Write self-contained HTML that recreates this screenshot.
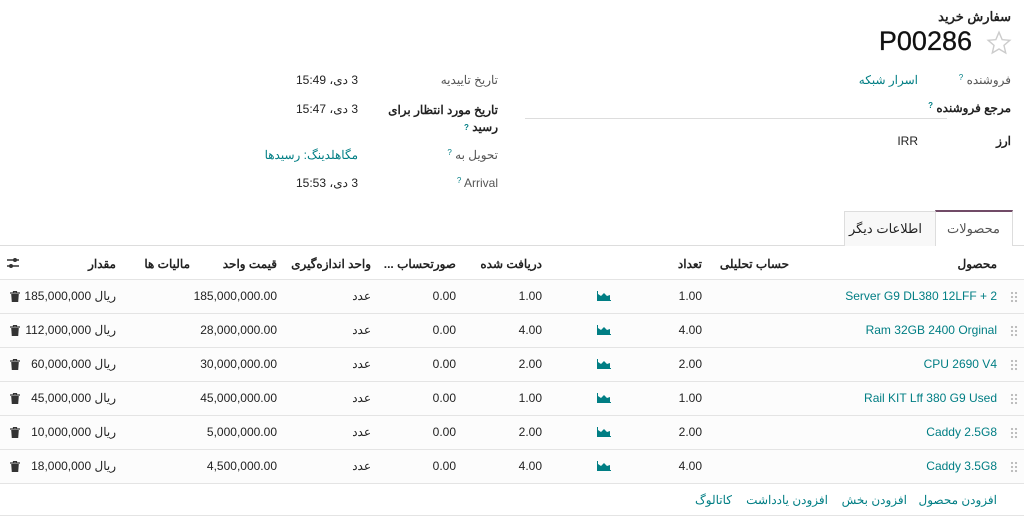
<!DOCTYPE html>
<html><head><meta charset="utf-8"><style>
body{margin:0;width:1024px;height:529px;background:#fff;font-family:"Liberation Sans","Noto Sans CJK SC",sans-serif;color:#222;font-size:12px;overflow:hidden;position:relative;direction:rtl}
.a{position:absolute;white-space:nowrap}
.r{text-align:right}
.t{color:#017e84}
.g{color:#555}
.q{color:#017e84;font-size:8px;vertical-align:top}
.l{direction:ltr}
.row{position:absolute;left:0;width:1024px;height:33px;border-bottom:1px solid #e4e4e4;background:#fcfcfc}
.hd{font-weight:bold;color:#222}
</style></head><body>
<div class="a r" style="right:13px;top:9px;font-size:13px;font-weight:bold">سفارش خرید</div>
<div class="a l" style="right:52px;top:26px;font-size:27px;color:#111;-webkit-text-stroke:0.3px #111">P00286</div>
<svg class="a" style="left:986px;top:30px" width="26" height="26" viewBox="0 0 24 24"><path d="M12 2l2.9 6.9 7.1.6-5.4 4.7 1.6 7-6.2-3.7-6.2 3.7 1.6-7L2 9.5l7.1-.6z" fill="none" stroke="#ccc" stroke-width="1.3"/></svg>

<div class="a g" style="right:13px;top:73px">فروشنده <span class="q">?</span></div>
<div class="a t" style="right:106px;top:73px">اسرار شبکه</div>
<div class="a" style="right:13px;top:101px;font-weight:bold">مرجع فروشنده <span class="q">?</span></div>
<div class="a" style="left:525px;top:118px;width:422px;height:1px;background:#ddd"></div>
<div class="a" style="right:13px;top:134px;font-weight:bold">ارز</div>
<div class="a" style="right:106px;top:134px">IRR</div>

<div class="a g" style="right:526px;top:73px">تاریخ تاییدیه</div>
<div class="a" style="right:666px;top:73px">3 دی، 15:49</div>
<div class="a r" style="right:526px;top:102px;font-weight:bold;line-height:17px">تاریخ مورد انتظار برای<br>رسید <span class="q">?</span></div>
<div class="a" style="right:666px;top:102px">3 دی، 15:47</div>
<div class="a g" style="right:526px;top:148px">تحویل به <span class="q">?</span></div>
<div class="a t" style="right:666px;top:148px">مگاهلدینگ: رسیدها</div>
<div class="a g l" style="right:526px;top:176px"><span class="q">?</span> Arrival</div>
<div class="a" style="right:666px;top:176px">3 دی، 15:53</div>

<div class="a" style="left:0;top:245px;width:1024px;height:1px;background:#ddd"></div>
<div class="a" style="left:844px;top:211px;width:92px;height:34px;border:1px solid #ddd;border-bottom:none;background:#f8f8f8"></div>
<div class="a" style="right:102px;top:221px;font-size:13px">اطلاعات دیگر</div>
<div class="a" style="left:935px;top:210px;width:76px;height:36px;border:1px solid #ddd;border-top:2px solid #714b67;border-bottom:none;background:#fff"></div>
<div class="a g" style="right:24px;top:221px;font-size:13px">محصولات</div>

<div class="row" style="top:246px;height:33px;background:#fff"></div>
<div class="a hd" style="right:27px;top:257px">محصول</div>
<div class="a hd" style="right:235px;top:257px">حساب تحلیلی</div>
<div class="a hd" style="right:322px;top:257px">تعداد</div>
<div class="a hd" style="right:482px;top:257px">دریافت شده</div>
<div class="a hd" style="right:568px;top:257px">صورتحساب ...</div>
<div class="a hd" style="right:653px;top:257px">واحد اندازه‌گیری</div>
<div class="a hd" style="right:747px;top:257px">قیمت واحد</div>
<div class="a hd" style="right:834px;top:257px">مالیات ها</div>
<div class="a hd" style="right:908px;top:257px">مقدار</div>
<svg class="a" style="left:6px;top:256px" width="14" height="14" viewBox="0 0 14 14"><path d="M1 4h12M1 10h12" stroke="#333" stroke-width="1.6"/><circle cx="9" cy="4" r="2" fill="#333"/><circle cx="5" cy="10" r="2" fill="#333"/></svg>

<div id="rows"></div>
<script>
var d=[["Server G9 DL380 12LFF + 2","1.00","1.00","185,000,000.00","185,000,000"],
["Ram 32GB 2400 Orginal","4.00","4.00","28,000,000.00","112,000,000"],
["CPU 2690 V4","2.00","2.00","30,000,000.00","60,000,000"],
["Rail KIT Lff 380 G9 Used","1.00","1.00","45,000,000.00","45,000,000"],
["Caddy 2.5G8","2.00","2.00","5,000,000.00","10,000,000"],
["Caddy 3.5G8","4.00","4.00","4,500,000.00","18,000,000"]];
var h="";
d.forEach(function(r,i){var y=280+i*34;var ty=y+9;
h+='<div class="row" style="top:'+y+'px"></div>';
h+='<div class="a" style="left:1010px;top:'+(y+11)+'px;width:8px;height:12px;background:radial-gradient(circle,#bbb 1px,transparent 1.3px) 0 0/4px 4px"></div>';
h+='<div class="a t l" style="right:27px;top:'+ty+'px">'+r[0]+'</div>';
h+='<div class="a" style="right:322px;top:'+ty+'px">'+r[1]+'</div>';
h+='<svg class="a" style="left:597px;top:'+(y+11)+'px" width="14" height="10" viewBox="0 0 14 10"><path d="M1 9V3l3 2 3-3 3 3 3-1v5z" fill="#017e84"/><path d="M0.5 0v9.5H14" stroke="#017e84" stroke-width="1" fill="none"/></svg>';
h+='<div class="a" style="right:482px;top:'+ty+'px">'+r[2]+'</div>';
h+='<div class="a" style="right:568px;top:'+ty+'px">0.00</div>';
h+='<div class="a" style="right:653px;top:'+ty+'px">عدد</div>';
h+='<div class="a" style="right:747px;top:'+ty+'px">'+r[3]+'</div>';
h+='<div class="a" style="right:908px;top:'+ty+'px">ریال '+r[4]+'</div>';
h+='<svg class="a" style="left:10px;top:'+(y+11)+'px" width="10" height="11" viewBox="0 0 10 11"><path d="M0 2h10M3.5 2V0.5h3V2" stroke="#333" stroke-width="1.2" fill="none"/><path d="M1.2 3h7.6l-.6 8H1.8z" fill="#333"/></svg>';
});
document.getElementById("rows").innerHTML=h;
</script>
<div class="a t" style="right:27px;top:493px">افزودن محصول</div>
<div class="a t" style="right:117px;top:493px">افزودن بخش</div>
<div class="a t" style="right:196px;top:493px">افزودن یادداشت</div>
<div class="a t" style="right:292px;top:493px">کاتالوگ</div>
<div class="a" style="left:0;top:515px;width:1024px;height:1px;background:#e4e4e4"></div>
</body></html>
